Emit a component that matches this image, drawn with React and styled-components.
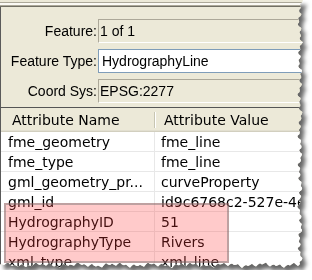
import styled, { createGlobalStyle } from "styled-components";

const GlobalStyle = createGlobalStyle`
    html, body {
        margin: 0;
        padding: 0;
        background: #fff;
    }
`

// jagged outline for the torn right and bottom edges
function tornEdge() {
    const pts = ["0px 0px"]
    const noise = (i, s) =>
        Math.sin(i * 0.9 + s) * 1.2 + Math.sin(i * 2.7 + s * 2) * 0.9 + Math.sin(i * 0.17 + s) * 1.0
    for (let y = 0; y <= 264; y += 2) {
        pts.push(`${(300 + noise(y, 1)).toFixed(1)}px ${y}px`)
    }
    for (let x = 300; x >= 0; x -= 2) {
        pts.push(`${x}px ${(265 + noise(x, 4)).toFixed(1)}px`)
    }
    return `polygon(${pts.join(", ")})`
}

const Paper = styled.div`
    width: 304px;
    height: 270px;
    filter: drop-shadow(4px 5px 2px rgba(0, 0, 0, 0.6));
`

const Sheet = styled.div`
    position: relative;
    width: 304px;
    height: 270px;
    overflow: hidden;
    background: #ece9d8;
    clip-path: ${tornEdge()};
`

const TopStrip = styled.div`
    height: 7px;
    background: linear-gradient(to bottom,
        #ece9d8 0 2px,
        #aca899 2px 3px,
        #fbfaf5 3px 5px,
        #aca899 5px 6px,
        #716f64 6px 7px);
`

const Form = styled.section`
    display: flex;
    flex-direction: column;
    gap: 6px;
    padding: 12px 0 4px 0;
    border-left: 1px solid #5a5a5a;
    font-family: "Liberation Sans", Arial, sans-serif;
    font-size: 14px;
    color: #000;
`

const FieldRow = styled.div`
    display: grid;
    grid-template-columns: 97px 1fr;
    align-items: center;
    height: 24px;
`

const Label = styled.label`
    text-align: right;
    padding-right: 1px;
`

const Field = styled.div`
    height: 24px;
    box-sizing: border-box;
    display: flex;
    align-items: center;
    white-space: nowrap;
    border: 1px solid;
    padding-left: ${p => (p.$editable ? "3px" : "1px")};
    background: ${p => (p.$editable ? "#fff" : "#ece9d8")};
    border-color: ${p => (p.$editable ? "#7f9db9" : "#aca899 #fff #fff #aca899")};
`

const Table = styled.section`
    border-top: 1px solid #555;
    border-left: 1px solid #5a5a5a;
    font-family: "DejaVu Sans", Verdana, sans-serif;
    font-size: 14px;
    color: #000;
`

const HeaderRow = styled.div`
    display: grid;
    grid-template-columns: 154px 1fr;
    height: 24px;
    background: #ece9d8;
    box-shadow: inset 0 -1px #d2cfbf, inset 0 -2px #e2dfd0;
`

const HeaderCell = styled.div`
    position: relative;
    display: flex;
    align-items: center;
    padding-left: ${p => p.$pad}px;
    white-space: nowrap;

    ${p => p.$sep && `
        &:after {
            content: '';
            position: absolute;
            right: 0;
            top: 4px;
            bottom: 4px;
            width: 1px;
            background: #c7c5b2;
            box-shadow: 1px 0 #fff;
        }
    `}
`

const Body = styled.div`
    position: relative;
    background: #fff;
`

const Row = styled.div`
    display: grid;
    grid-template-columns: 154px 1fr;
    height: 20px;
    box-sizing: border-box;
    border-bottom: 1px solid #e8e8e8;
`

const Cell = styled.div`
    display: flex;
    align-items: center;
    padding-left: ${p => p.$pad}px;
    white-space: nowrap;
    overflow: hidden;
    border-right: ${p => (p.$first ? "1px solid #e8e8e8" : "none")};
`

const Highlight = styled.div`
    position: absolute;
    left: 3px;
    top: 71px;
    width: 225px;
    height: 60px;
    box-sizing: border-box;
    border: 2px solid rgba(110, 110, 110, 0.45);
    background: rgba(255, 60, 60, 0.27);
    pointer-events: none;
`

const fields = [
    { label: "Feature:", value: "1 of 1" },
    { label: "Feature Type:", value: "HydrographyLine", editable: true },
    { label: "Coord Sys:", value: "EPSG:2277" },
]

const attributes = [
    ["fme_geometry", "fme_line"],
    ["fme_type", "fme_line"],
    ["gml_geometry_pr...", "curveProperty"],
    ["gml_id", "id9c6768c2-527e-4e"],
    ["HydrographyID", "51"],
    ["HydrographyType", "Rivers"],
    ["xml_type", "xml_line"],
]

export default function App() {
    return (
        <>
            <GlobalStyle />
            <Paper>
                <Sheet>
                    <TopStrip />
                    <Form>
                        {fields.map(f => (
                            <FieldRow key={f.label}>
                                <Label>{f.label}</Label>
                                <Field $editable={f.editable}>{f.value}</Field>
                            </FieldRow>
                        ))}
                    </Form>
                    <Table>
                        <HeaderRow>
                            <HeaderCell $pad={11} $sep>Attribute Name</HeaderCell>
                            <HeaderCell $pad={9}>Attribute Value</HeaderCell>
                        </HeaderRow>
                        <Body>
                            {attributes.map(([name, value]) => (
                                <Row key={name}>
                                    <Cell $first $pad={7}>{name}</Cell>
                                    <Cell $pad={6}>{value}</Cell>
                                </Row>
                            ))}
                            <Highlight />
                        </Body>
                    </Table>
                </Sheet>
            </Paper>
        </>
    )
}
